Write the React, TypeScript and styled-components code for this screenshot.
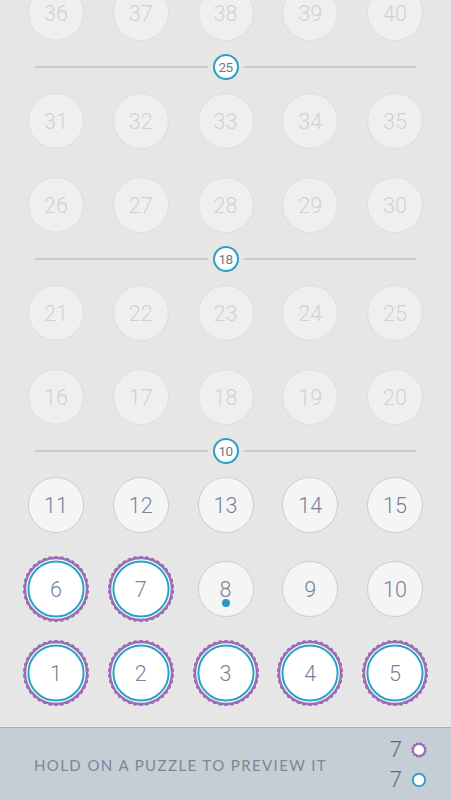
import React from "react";
import styled, { createGlobalStyle, css } from "styled-components";

const GlobalStyle = createGlobalStyle`
  html, body {
    margin: 0;
    padding: 0;
    background: #e6e6e6;
  }
  body {
    font-family: "Roboto", "DejaVu Sans", sans-serif;
  }
`;

const Screen = styled.div`
  width: 451px;
  height: 800px;
  display: flex;
  flex-direction: column;
  overflow: hidden;
  background: #e6e6e6;
`;

const Scroller = styled.div`
  flex: 1;
  min-height: 0;
  overflow: hidden;
  display: flex;
  flex-direction: column;
  justify-content: flex-end;
  padding-bottom: 26px;
`;

const Row = styled.div<{ $gap: number }>`
  display: grid;
  grid-template-columns: repeat(5, 56px);
  justify-content: space-between;
  padding: 0 28px;
  margin-top: ${(p) => p.$gap}px;
  &:first-child {
    margin-top: 0;
  }
`;

const Cell = styled.div`
  position: relative;
  width: 56px;
  height: 56px;
  display: flex;
  align-items: center;
  justify-content: center;
`;

type State = "locked" | "open" | "done";

const Bubble = styled.div<{ $state: State }>`
  position: relative;
  width: 56px;
  height: 56px;
  box-sizing: border-box;
  border-radius: 50%;
  display: flex;
  align-items: center;
  justify-content: center;
  font-size: 21.5px;
  font-weight: 300;
  ${(p) =>
    p.$state === "locked" &&
    css`
      background: #efefef;
      border: 1.5px solid #d3e2e5;
      color: #cbd3d8;
    `}
  ${(p) =>
    p.$state === "open" &&
    css`
      background: #f5f5f6;
      border: 1.5px solid #b9d4db;
      color: #73849b;
    `}
  ${(p) =>
    p.$state === "done" &&
    css`
      background: transparent;
      color: #73849b;
    `}
`;

const Badge = styled.svg`
  position: absolute;
  left: -5px;
  top: -5px;
  width: 66px;
  height: 66px;
`;

const Num = styled.span`
  position: relative;
`;

const Dot = styled.span`
  position: absolute;
  left: 50%;
  bottom: 9px;
  width: 8px;
  height: 8px;
  margin-left: -4px;
  border-radius: 50%;
  background: #2a9bbb;
`;

const Divider = styled.div`
  display: flex;
  align-items: center;
  gap: 5px;
  padding: 0 35px;
  height: 26px;
  margin-top: 13px;
  margin-bottom: 13px;
`;

const Rule = styled.div`
  flex: 1;
  height: 1.5px;
  background: #c3ccd3;
`;

const Marker = styled.div`
  width: 26px;
  height: 26px;
  box-sizing: border-box;
  border-radius: 50%;
  border: 2px solid #2aa1c0;
  background: #ffffff;
  color: #6d7a88;
  font-size: 13.5px;
  display: flex;
  align-items: center;
  justify-content: center;
  letter-spacing: -0.5px;
`;

const Footer = styled.div`
  height: 73px;
  box-sizing: border-box;
  border-top: 1.5px solid #9fb1b9;
  background: #c5ced5;
  display: flex;
  align-items: center;
  justify-content: space-between;
  padding: 0 24px 0 34px;
`;

const Hint = styled.div`
  font-family: "Lato", "Open Sans", sans-serif;
  font-weight: 400;
  font-size: 15px;
  letter-spacing: 1.4px;
  color: #788899;
  margin-top: 2px;
`;

const Counts = styled.div`
  display: flex;
  flex-direction: column;
  gap: 3px;
  margin-top: 1px;
`;

const CountRow = styled.div`
  display: flex;
  align-items: center;
  gap: 9px;
  font-size: 22px;
  font-weight: 300;
  color: #5f6a73;
  line-height: 27px;
`;

function gearPath(cx: number, cy: number, rIn: number, rOut: number, teeth: number) {
  const pts: string[] = [];
  const steps = teeth * 8;
  for (let i = 0; i <= steps; i++) {
    const a = (i / steps) * Math.PI * 2;
    const t = Math.abs(Math.sin((a * teeth) / 2));
    const r = rIn + (rOut - rIn) * t;
    pts.push(`${(cx + r * Math.cos(a)).toFixed(2)},${(cy + r * Math.sin(a)).toFixed(2)}`);
  }
  return "M" + pts.join("L") + "Z";
}

const BIG_GEAR = gearPath(33, 33, 31.8, 33.2, 34);
const SMALL_GEAR = gearPath(8, 8, 6.6, 7.8, 12);

function DoneRing() {
  return (
    <Badge viewBox="0 0 66 66">
      <path d={BIG_GEAR} fill="#9a6db5" />
      <circle cx="33" cy="33" r="29.8" fill="#ffffff" />
      <circle cx="33" cy="33" r="27.6" fill="none" stroke="#2aa3c2" strokeWidth="2" />
    </Badge>
  );
}

function Puzzle({ n, state, dot }: { n: number; state: State; dot?: boolean }) {
  return (
    <Cell>
      <Bubble $state={state}>
        {state === "done" && <DoneRing />}
        <Num>{n}</Num>
        {dot && <Dot />}
      </Bubble>
    </Cell>
  );
}

type Block =
  | { kind: "row"; from: number; gap: number }
  | { kind: "div"; label: number };

const blocks: Block[] = [
  { kind: "row", from: 36, gap: 0 },
  { kind: "div", label: 25 },
  { kind: "row", from: 31, gap: 0 },
  { kind: "row", from: 26, gap: 28 },
  { kind: "div", label: 18 },
  { kind: "row", from: 21, gap: 0 },
  { kind: "row", from: 16, gap: 28 },
  { kind: "div", label: 10 },
  { kind: "row", from: 11, gap: 0 },
  { kind: "row", from: 6, gap: 28 },
  { kind: "row", from: 1, gap: 28 },
];

function stateOf(n: number): State {
  if (n <= 7) return "done";
  if (n <= 15) return "open";
  return "locked";
}

export default function App() {
  return (
    <>
      <GlobalStyle />
      <Screen>
        <Scroller>
          {blocks.map((b, i) =>
            b.kind === "div" ? (
              <Divider key={i}>
                <Rule />
                <Marker>{b.label}</Marker>
                <Rule />
              </Divider>
            ) : (
              <Row key={i} $gap={b.gap}>
                {[0, 1, 2, 3, 4].map((k) => {
                  const n = b.from + k;
                  return <Puzzle key={n} n={n} state={stateOf(n)} dot={n === 8} />;
                })}
              </Row>
            )
          )}
        </Scroller>
        <Footer>
          <Hint>HOLD ON A PUZZLE TO PREVIEW IT</Hint>
          <Counts>
            <CountRow>
              7
              <svg width="16" height="16" viewBox="0 0 16 16">
                <path d={SMALL_GEAR} fill="#9a6db5" />
                <circle cx="8" cy="8" r="5" fill="#ffffff" />
              </svg>
            </CountRow>
            <CountRow>
              7
              <svg width="16" height="16" viewBox="0 0 16 16">
                <circle cx="8" cy="8" r="6.2" fill="#ffffff" stroke="#2aa3c2" strokeWidth="2" />
              </svg>
            </CountRow>
          </Counts>
        </Footer>
      </Screen>
    </>
  );
}
